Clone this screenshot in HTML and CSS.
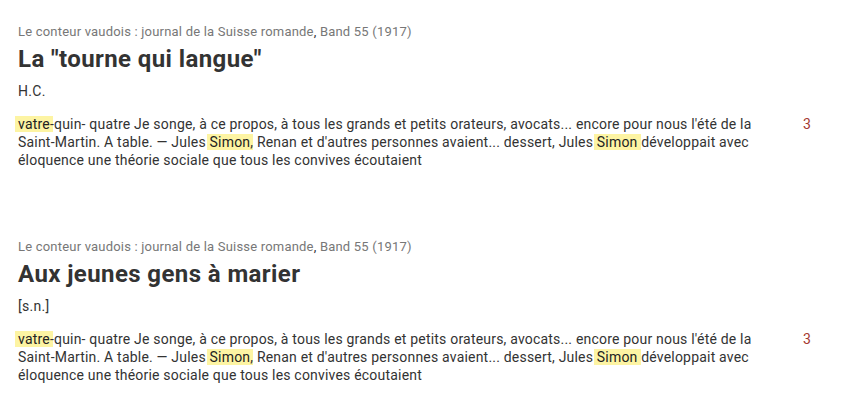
FILE: index.html
```html
<!DOCTYPE html>
<html lang="fr">
<head>
    <meta charset="UTF-8">
    <meta name="viewport" content="width=device-width, initial-scale=1.0">
    <title>Résultats de recherche</title>
    <link rel="stylesheet" href="styles.css">
</head>
<body>
    <div class="results">
        <div class="result">
            <div class="source">Le conteur vaudois : journal de la Suisse romande<span class="sep">,</span> Band 55 (1917)</div>
            <h2 class="title">La "tourne qui langue"</h2>
            <div class="author">H.C.</div>
            <div class="hit">
                <p class="snippet"><mark>vatre</mark>-quin- quatre Je songe, à ce propos, à tous les grands et petits orateurs, avocats... encore pour nous l'été de la Saint-Martin. A table. — Jules <mark>Simon</mark>, Renan et d'autres personnes avaient... dessert, Jules <mark>Simon</mark> développait avec éloquence une théorie sociale que tous les convives écoutaient</p>
                <span class="page">3</span>
            </div>
        </div>

        <div class="result">
            <div class="source">Le conteur vaudois : journal de la Suisse romande<span class="sep">,</span> Band 55 (1917)</div>
            <h2 class="title">Aux jeunes gens à marier</h2>
            <div class="author">[s.n.]</div>
            <div class="hit">
                <p class="snippet"><mark>vatre</mark>-quin- quatre Je songe, à ce propos, à tous les grands et petits orateurs, avocats... encore pour nous l'été de la Saint-Martin. A table. — Jules <mark>Simon</mark>, Renan et d'autres personnes avaient... dessert, Jules <mark>Simon</mark> développait avec éloquence une théorie sociale que tous les convives écoutaient</p>
                <span class="page">3</span>
            </div>
        </div>
    </div>
</body>
</html>
```

FILE: styles.css
```css
body {
    margin: 0;
    font-family: Roboto, "Liberation Sans", sans-serif;
    color: #333;
    background: #fff;
}

.results {
    padding: 24px 18px 0 18px;
}

.result {
    margin-bottom: 70px;
}

.result:last-child {
    margin-bottom: 0;
}

.source {
    font-size: 13px;
    line-height: 16px;
    letter-spacing: 0.2px;
    color: #777;
}

.source .sep {
    color: #333;
}

.title {
    margin: 4px 0 0 0;
    font-size: 24px;
    line-height: 30px;
    letter-spacing: 0.4px;
    font-weight: bold;
    color: #333;
}

.author {
    margin-top: 7px;
    font-size: 14px;
    line-height: 20px;
    letter-spacing: 0.3px;
}

.hit {
    display: flex;
    margin-top: 14px;
}

.snippet {
    width: 745px;
    margin: 0;
    font-size: 14px;
    line-height: 18px;
    letter-spacing: 0.2px;
}

.page {
    margin-left: 40px;
    font-size: 14px;
    line-height: 18px;
    color: #a5392f;
}

mark {
    background: #fdf4a3;
    color: #222;
    box-shadow: 3px 0 0 #fdf4a3, -3px 0 0 #fdf4a3;
}
```
